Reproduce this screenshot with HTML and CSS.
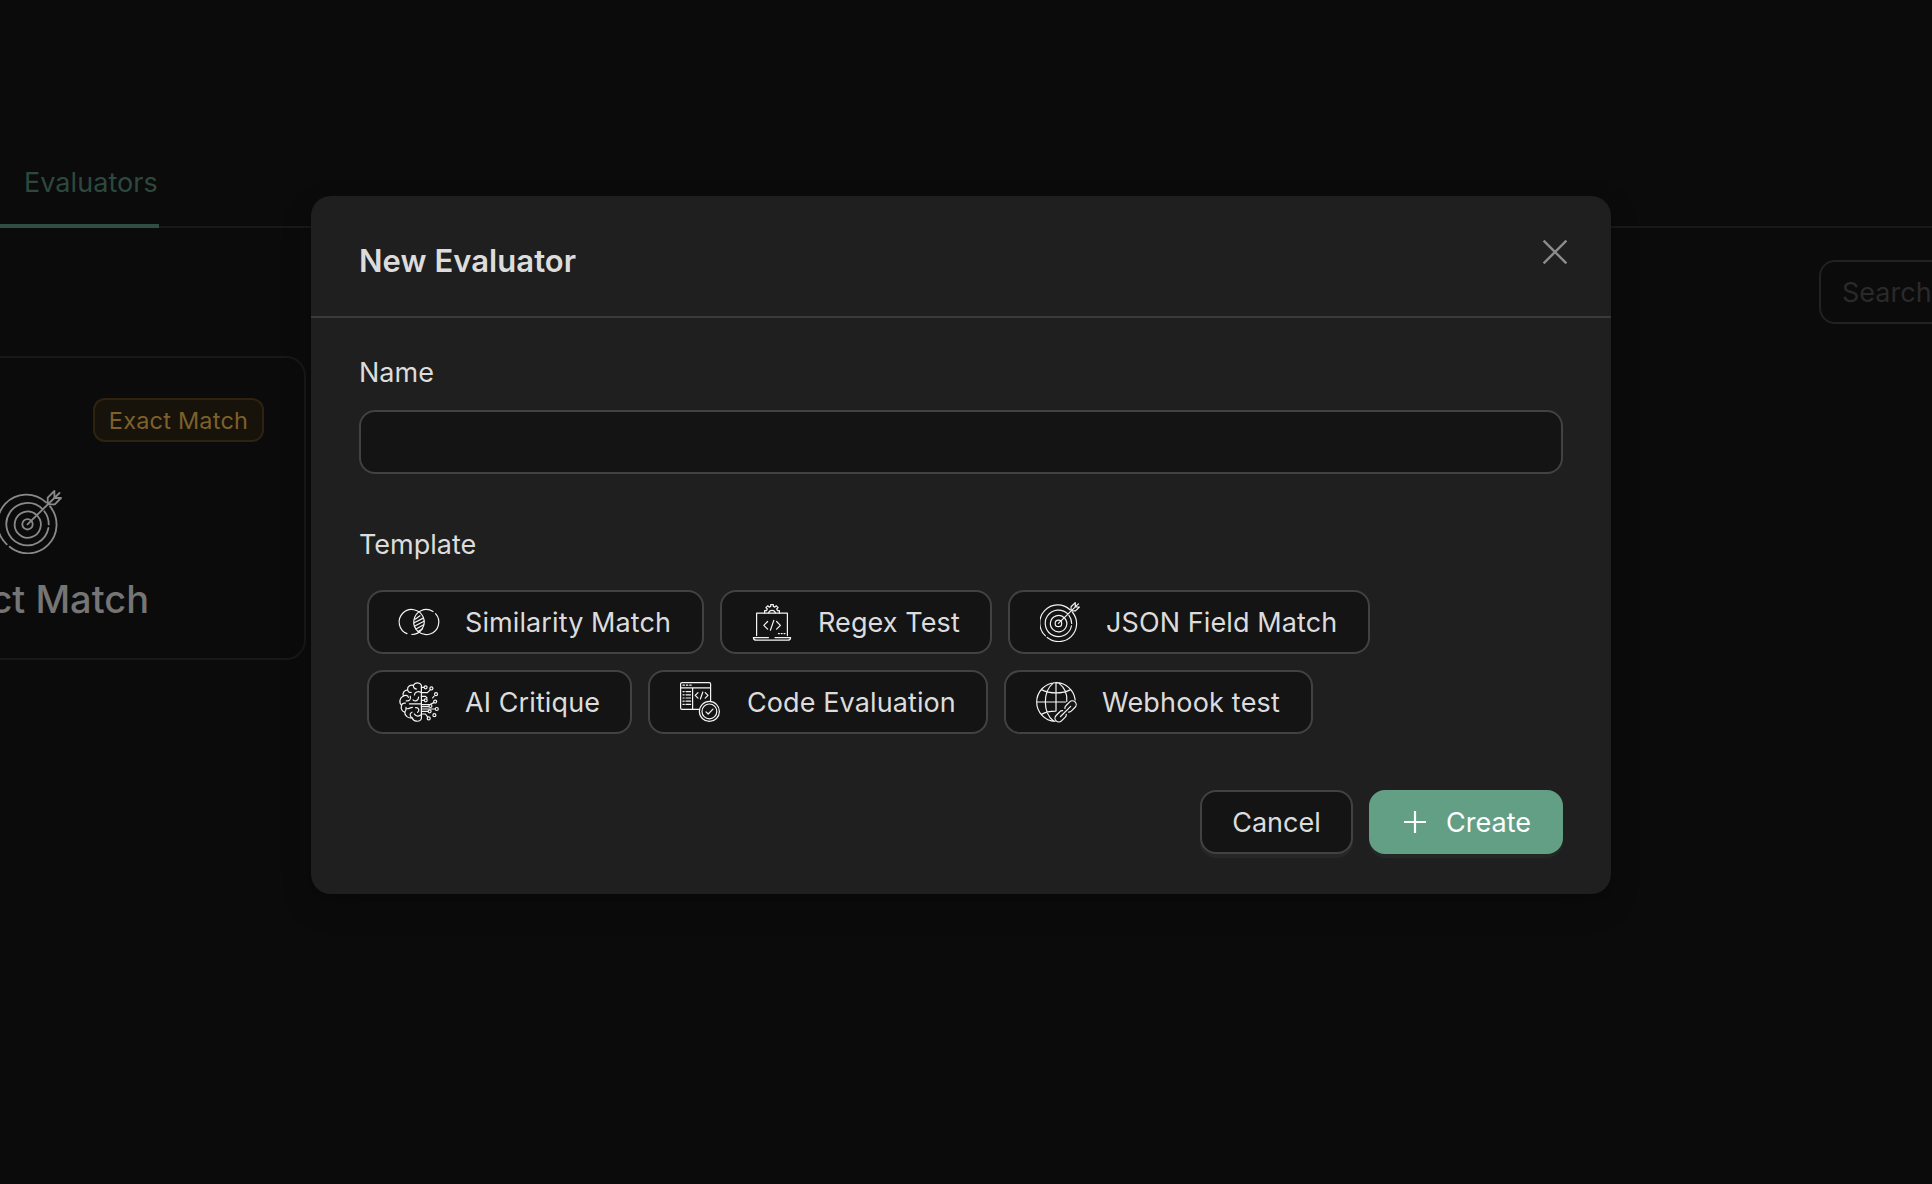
FILE: index.html
```html
<!DOCTYPE html>
<html lang="en">
<head>
<meta charset="utf-8">
<title>New Evaluator</title>
<link rel="stylesheet" href="styles.css">
</head>
<body>
<svg class="defs" aria-hidden="true">
  <symbol id="target" viewBox="0 0 64 64">
    <path d="M48 12.4A28.7 28.7 0 0 0 8.7 54.3M11.6 56.8A28.7 28.7 0 0 0 52 16.4"/>
    <path d="M44.5 19.1A21.2 21.2 0 1 0 50.4 38M50.7 34.4A21.2 21.2 0 0 0 46.3 21.3"/>
    <path d="M38.4 24.8A13.1 13.1 0 1 0 39.6 26"/>
    <circle cx="29.5" cy="34.3" r="5.2"/>
    <path d="M29.5 34.3L61.5 3M49.7 14.3V7.6L56.4 1V7.8M49.7 14.3H56.8L63 8H56"/>
  </symbol>
</svg>

<div class="page">
  <nav class="tabs"><a class="tab">Evaluators</a></nav>
  <div class="toolbar"><div class="search">Search</div></div>
  <article class="card">
    <span class="tag">Exact Match</span>
    <svg class="card-icon line"><use href="#target"/></svg>
    <h3 class="card-title">Exact Match</h3>
  </article>
</div>

<div class="backdrop">
  <section class="modal">
    <header class="modal-head">
      <h2 class="modal-title">New Evaluator</h2>
      <svg class="close" viewBox="0 0 26 26"><path d="M1.6 1.6L24.4 24.4M24.4 1.6L1.6 24.4"/></svg>
    </header>
    <div class="modal-body">
      <label class="label">Name</label>
      <div class="input"></div>
      <label class="label label-template">Template</label>
      <div class="templates">
        <button class="chip similarity">
          <svg class="icon line" viewBox="0 0 40 40">
            <path d="M8 31.6A12.5 12.5 0 1 1 12.8 32.5M34 9.5A12.5 12.5 0 1 0 36.5 11.6"/>
            <path d="M16.2 17.2L21 13.8M15.2 20.8L23.8 16.4M15.4 24.2L25 19.2M17 27L24.8 22.8M19 29.4L23.6 26.8"/>
          </svg>
          <span>Similarity Match</span>
        </button>
        <button class="chip regex">
          <svg class="icon line" viewBox="0 0 40 40">
            <path d="M4.6 33.6V11.2H35.4V33.6"/>
            <path d="M1.4 35.6H16.5M23 35.6H38.6Q38.4 38.2 36 38.2H4Q1.6 38.2 1.4 35.6"/>
            <path d="M12.6 11V8.6H14.6L15.3 7L13.9 5.6L15.8 3.8L17.2 5.1L18.7 4.4V2.6H21.3V4.4L22.8 5.1L24.2 3.8L26.1 5.6L24.7 7L25.4 8.6H27.4V11M16.6 11A3.5 3.5 0 0 1 23.4 11"/>
            <path d="M15.6 19.5L11.8 23.3L15.6 27.1M24.6 19.5L28.4 23.3L24.6 27.1M21.8 18.4L18.4 28.2"/>
            <path d="M26.4 31.6h1M29.2 31.6h1M32 31.6h1"/>
          </svg>
          <span>Regex Test</span>
        </button>
        <button class="chip json">
          <svg class="icon line target-small"><use href="#target"/></svg>
          <span>JSON Field Match</span>
        </button>
        <button class="chip critique">
          <svg class="icon line" viewBox="0 0 40 40">
            <path d="M22.4 3.2C21 .2 16.2-.2 14.4 3.4C11.2 2.6 8.2 4.6 8.6 7.8C5.2 8 3.2 11.2 4.4 14C.8 15.4-.4 20.6 2.6 23.2C1.4 26.6 3.2 29.6 5.8 30.2C5.6 33.8 9.2 36.6 13 35.8C14.6 39.8 20.8 40.6 22.4 36.6Z"/>
            <path d="M14.4 3.4C14.2 5.6 15.6 7 17.6 7M8.6 7.8C8.8 9.8 10.6 10.8 12.2 10.4M4.4 14C6.2 12.6 8.8 13.4 9.4 15.4M22.2 10.4C19 8.8 15.6 10.2 15.4 13M11.2 14.2C12.6 17.4 10 19.4 7.2 18.8M14 17.8C16 19.8 19.4 18.8 19.6 15.2M2.6 23.2C3 21.6 4.6 20.8 6.4 21.2M10.4 21.8H22.2M7 25.4C7.4 28.6 5.8 30.2 5.8 30.2M7 26.6C9.6 27.4 10.8 25.6 13.4 25.4M13 35.8C10.6 34.4 10.4 31.2 13 30.2M16.6 25.6C20 25.4 20.8 28.6 18.6 30.4M15.4 32C17 34.8 20.4 34.4 22.2 32.8"/>
            <path d="M22.4 5.3H25M22.4 10.6H28.4L31.4 7.6M22.4 14.4H26.5L28 16M22.4 18.3H25.2M22.4 22.6H31L34.8 20.6M22.4 24.6H29.8M22.4 27H33L36.2 27M22.4 29.3H29.2M22.4 32H26.4L28.6 34.8M35 14.4L33.6 15.8"/>
            <g><circle cx="26.6" cy="5.3" r="1.5"/><circle cx="32.4" cy="6.4" r="1.5"/><circle cx="37" cy="12.2" r="1.5"/><circle cx="26.7" cy="18.3" r="1.5"/><circle cx="36.2" cy="19.6" r="1.5"/><circle cx="31.4" cy="24" r="1.5"/><circle cx="37.8" cy="27" r="1.5"/><circle cx="30.6" cy="29.3" r="1.5"/><circle cx="35.4" cy="33.2" r="1.5"/><circle cx="29.7" cy="36.4" r="1.5"/></g>
          </svg>
          <span>AI Critique</span>
        </button>
        <button class="chip code">
          <svg class="icon line" viewBox="0 0 40 40">
            <path d="M18.6 27.4H2Q.6 27.4 .6 26V2Q.6 .6 2 .6H29.4Q30.6 .6 30.6 2V18.6M.6 5.8H30.6M12.6 5.8V27.4"/>
            <path d="M3 3.2h1.4M6.4 3.2h1.4M9.8 3.2h1.4M3 9.6h1.2M3 12.8h1.2M3 16h1.2M3 19.2h1.2M3 22.4h1.2M6 9.6h4.6M6 12.8h4.6M6 16h4.6M6 19.2h4.6M6 22.4h4.6"/>
            <path d="M18 10.6L15.2 13.4L18 16.2M25.2 10.6L28 13.4L25.2 16.2M22.8 10L20.4 17"/>
            <circle cx="29.4" cy="29.4" r="10"/><circle cx="29.4" cy="29.4" r="7.4"/>
            <path d="M26 29.8L28.2 32L33 27.2"/>
          </svg>
          <span>Code Evaluation</span>
        </button>
        <button class="chip webhook">
          <svg class="icon line" viewBox="0 0 40 40">
            <path d="M39.2 18A19.3 19.3 0 1 0 19 39.3M20 .7V29M.7 20H29.6M17.4 .9C6.6 9.6 6.6 30.4 17.6 39.2M22.6 .9C28.8 5.8 31.4 13 30.8 19.4M5.4 7.6C14 12 26 12 34.6 7.6M5.4 32.4C9.6 30.2 14.6 29.2 19.4 29.2"/>
            <g transform="rotate(-45 29.6 29.4)">
              <path d="M28 26.8A3.6 3.6 0 0 0 25 25.6H20A3.8 3.8 0 0 0 20 33.2H25A3.6 3.6 0 0 0 28 32M31.2 26.8A3.6 3.6 0 0 1 34.2 25.6H39.2A3.8 3.8 0 0 1 39.2 33.2H34.2A3.6 3.6 0 0 1 31.2 32"/>
              <path d="M22.4 29.4H36.8"/>
            </g>
          </svg>
          <span>Webhook test</span>
        </button>
      </div>
      <footer class="actions">
        <button class="btn cancel"><span>Cancel</span></button>
        <button class="btn create">
          <svg class="plus" viewBox="0 0 28 28"><path d="M14 3V25M3 14H25"/></svg>
          <span>Create</span>
        </button>
      </footer>
    </div>
  </section>
</div>
</body>
</html>
```
FILE: styles.css
```css
* { box-sizing: border-box; }

body {
  margin: 0;
  height: 1184px;
  overflow: hidden;
  position: relative;
  background: #0b0b0b;
  color: #dcdcdc;
  font: 430 27px/44px Inter, "Liberation Sans", sans-serif;
}

h2, h3 { margin: 0; }
button { font: inherit; color: inherit; margin: 0; }
.defs { position: absolute; width: 0; height: 0; }

.line {
  fill: none;
  stroke: currentColor;
  stroke-width: 1.2;
  stroke-linecap: round;
  stroke-linejoin: round;
}

/* Dimmed page behind the dialog */
.page { height: 1184px; overflow: hidden; }

.tabs {
  display: flex;
  align-items: flex-end;
  height: 228px;
  box-shadow: inset 0 -2px #191919;
}
.tab {
  width: 159px;
  height: 67px;
  padding-left: 24px;
  border-bottom: 4px solid #2f4d42;
  color: #2d493f;
  letter-spacing: .05px;
}

.toolbar {
  display: flex;
  justify-content: flex-end;
  margin: 32px -287px 0 0;
}
.search {
  width: 400px;
  height: 64px;
  padding: 9px 21px;
  border: 2px solid #222;
  border-radius: 16px;
  color: #2a2a2a;
}

.card {
  display: flex;
  flex-direction: column;
  align-items: flex-end;
  width: 552px;
  height: 304px;
  margin: 32px 0 0 -246px;
  padding: 40px 40px 0;
  border: 2px solid #181818;
  border-radius: 20px;
}
.tag {
  flex: none;
  width: 171px;
  height: 44px;
  padding-top: 1px;
  border: 2px solid #302210;
  border-radius: 12px;
  background: #17120a;
  color: #7d602b;
  font-size: 23.5px;
  line-height: 40px;
  letter-spacing: .2px;
  text-align: center;
}
.card-icon {
  flex: none;
  width: 64px;
  height: 64px;
  margin: 48px 202px 0 0;
  color: #8a8a8a;
  stroke-width: 1.8;
}
.card-title {
  margin: 16px 115px 0 0;
  color: #757575;
  font-size: 38px;
  font-weight: 500;
  line-height: 58px;
}

/* Dialog */
.backdrop {
  position: absolute;
  inset: 0;
  padding: 196px 321px 0 311px;
}
.modal {
  height: 698px;
  border-radius: 20px;
  background: #1f1f1f;
  box-shadow: 0 12px 32px rgba(0, 0, 0, .16), 0 6px 12px -8px rgba(0, 0, 0, .2);
}
.modal-head {
  display: flex;
  justify-content: space-between;
  align-items: flex-start;
  height: 122px;
  padding: 41px 43px 0 48px;
  border-bottom: 2px solid #3a3a3a;
}
.modal-title {
  font-size: 31px;
  font-weight: 620;
  line-height: 48px;
  letter-spacing: .05px;
}
.close {
  width: 26px;
  height: 26px;
  margin-top: 2px;
  fill: none;
  stroke: #8c8c8c;
  stroke-width: 2.4;
}
.modal-body { padding: 33px 48px 40px; }
.label { display: block; }
.input {
  height: 64px;
  margin-top: 15px;
  border: 2px solid #424242;
  border-radius: 16px;
  background: #141414;
}
.label-template { margin-top: 49px; }

.templates {
  display: flex;
  flex-wrap: wrap;
  gap: 16px;
  width: 1040px;
  margin-top: 23px;
  padding-left: 8px;
}
.chip {
  display: flex;
  align-items: center;
  gap: 26px;
  height: 64px;
  padding: 0 0 0 30px;
  border: 2px solid #424242;
  border-radius: 16px;
  background: #141414;
  letter-spacing: .1px;
  white-space: nowrap;
}
.chip span, .btn span { padding-top: 2px; }
.similarity { width: 337px; }
.regex { width: 272px; }
.json { width: 362px; }
.critique { width: 265px; }
.code { width: 340px; gap: 27px; }
.webhook { width: 309px; letter-spacing: .2px; }
.icon {
  flex: none;
  width: 40px;
  height: 40px;
  overflow: visible;
  color: #f4f4f4;
}
.target-small { stroke-width: 1.9; }

.actions {
  display: flex;
  justify-content: flex-end;
  gap: 16px;
  margin-top: 56px;
}
.btn {
  display: flex;
  align-items: center;
  justify-content: center;
  gap: 17px;
  height: 64px;
  padding: 0;
  border-radius: 16px;
}
.cancel {
  width: 153px;
  border: 2px solid #424242;
  background: #141414;
  box-shadow: 0 4px 0 #272727;
}
.create {
  width: 194px;
  border: 0;
  background: #639f85;
  color: #fff;
  box-shadow: 0 4px 0 #222826;
}
.plus {
  width: 28px;
  height: 28px;
  fill: none;
  stroke: currentColor;
  stroke-width: 2.2;
}
```
